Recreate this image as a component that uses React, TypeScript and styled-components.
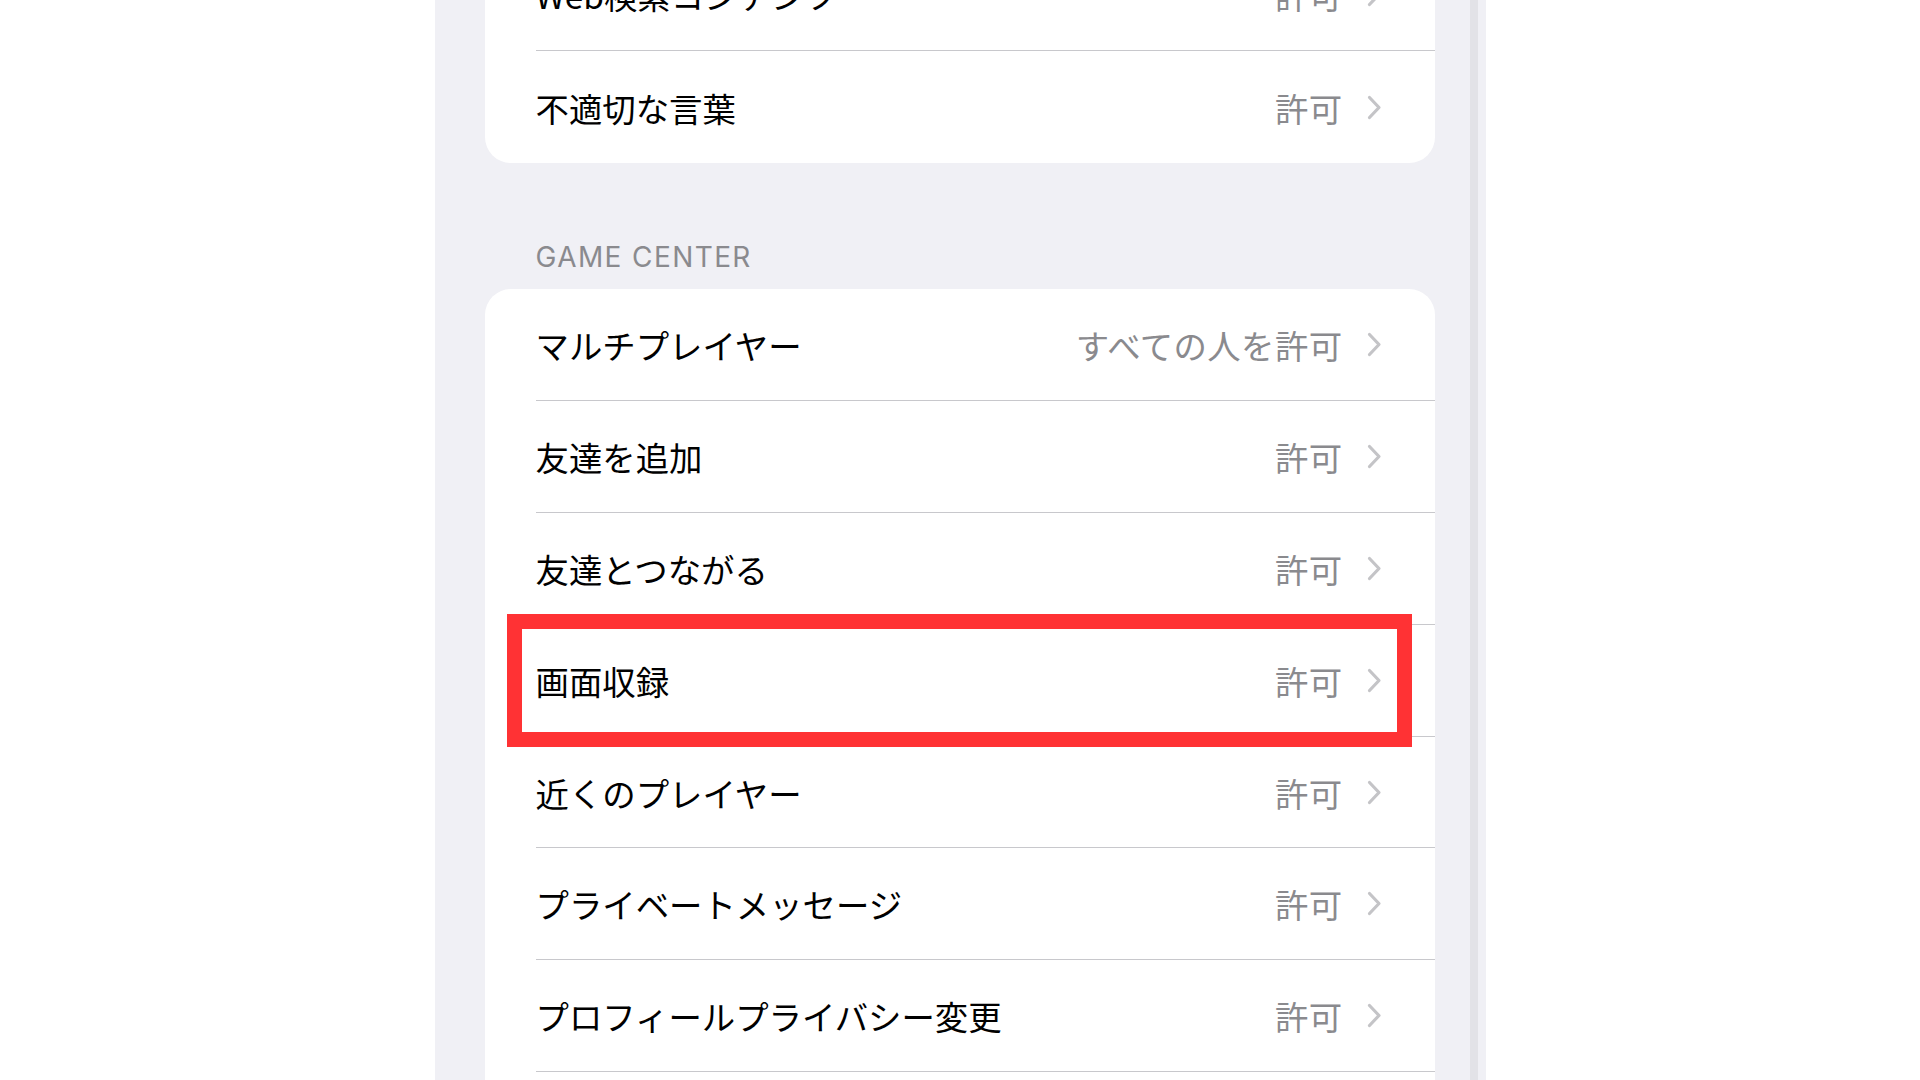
import React from 'react'
import styled, { createGlobalStyle } from 'styled-components'

const GlobalStyle = createGlobalStyle`
  html, body {
    margin: 0;
    padding: 0;
    background: #ffffff;
    overflow: hidden;
  }
  body {
    font-family: "Noto Sans CJK JP", "Noto Sans", sans-serif;
  }
`

const Page = styled.div`
  width: 1920px;
  height: 1080px;
  display: flex;
  justify-content: center;
  overflow: hidden;
`

const Screen = styled.div`
  width: 1051px;
  height: 1080px;
  display: flex;
  background: #f0f0f5;
`

const Content = styled.div`
  flex: 1;
  display: flex;
  flex-direction: column;
  padding: 0 35px 0 50px;
  margin-top: -60.6px;
`

const ScrollTrack = styled.div`
  width: 16px;
  display: flex;
  & > div {
    width: 8px;
    background: #e2e2e7;
  }
`

const Card = styled.div<{ $open?: boolean }>`
  background: #ffffff;
  border-radius: ${p => (p.$open ? '26px 26px 0 0' : '26px')};
  padding-left: 51px;
  padding-bottom: ${p => (p.$open ? '60px' : '0')};
  display: flex;
  flex-direction: column;
`

const SectionTitle = styled.div`
  font-family: Inter, "Noto Sans", sans-serif;
  font-size: 28px;
  line-height: 34px;
  letter-spacing: 1.4px;
  color: #8a8a8e;
  padding: 76.7px 0 15.8px 51px;
`

const Row = styled.div<{ $last?: boolean }>`
  position: relative;
  height: 111.8px;
  box-sizing: border-box;
  display: flex;
  align-items: center;
  padding-right: 53px;
  border-bottom: ${p => (p.$last ? 'none' : '1px solid #c8c8cc')};
`

const Label = styled.span`
  flex: 1;
  font-size: 33.4px;
  color: #000000;
  white-space: nowrap;
`

const Value = styled.span`
  font-size: 33.4px;
  letter-spacing: 0.4px;
  color: #8a8a8e;
  margin-right: 24px;
  white-space: nowrap;
`

const Highlight = styled.div`
  position: absolute;
  top: -11px;
  bottom: -11px;
  left: -29px;
  right: 23px;
  border: 15px solid #ff3234;
  pointer-events: none;
  z-index: 2;
`

const Chevron = () => (
  <svg width="15" height="25" viewBox="0 0 15 25" fill="none">
    <path
      d="M2.5 2.5 L12 12.5 L2.5 22.5"
      stroke="#c4c4c7"
      strokeWidth="3.2"
      strokeLinecap="round"
      strokeLinejoin="round"
    />
  </svg>
)

type Item = { label: string; value: string; marked?: boolean }

const contentItems: Item[] = [
  { label: 'Web検索コンテンツ', value: '許可' },
  { label: '不適切な言葉', value: '許可' },
]

const gameCenterItems: Item[] = [
  { label: 'マルチプレイヤー', value: 'すべての人を許可' },
  { label: '友達を追加', value: '許可' },
  { label: '友達とつながる', value: '許可' },
  { label: '画面収録', value: '許可', marked: true },
  { label: '近くのプレイヤー', value: '許可' },
  { label: 'プライベートメッセージ', value: '許可' },
  { label: 'プロフィールプライバシー変更', value: '許可' },
]

function SettingRow({ item, last }: { item: Item; last?: boolean }) {
  return (
    <Row $last={last}>
      <Label>{item.label}</Label>
      <Value>{item.value}</Value>
      <Chevron />
      {item.marked && <Highlight />}
    </Row>
  )
}

export default function App() {
  return (
    <Page>
      <GlobalStyle />
      <Screen>
        <Content>
          <Card>
            {contentItems.map((item, i) => (
              <SettingRow key={item.label} item={item} last={i === contentItems.length - 1} />
            ))}
          </Card>
          <SectionTitle>GAME CENTER</SectionTitle>
          <Card $open>
            {gameCenterItems.map(item => (
              <SettingRow key={item.label} item={item} />
            ))}
          </Card>
        </Content>
        <ScrollTrack>
          <div />
        </ScrollTrack>
      </Screen>
    </Page>
  )
}
